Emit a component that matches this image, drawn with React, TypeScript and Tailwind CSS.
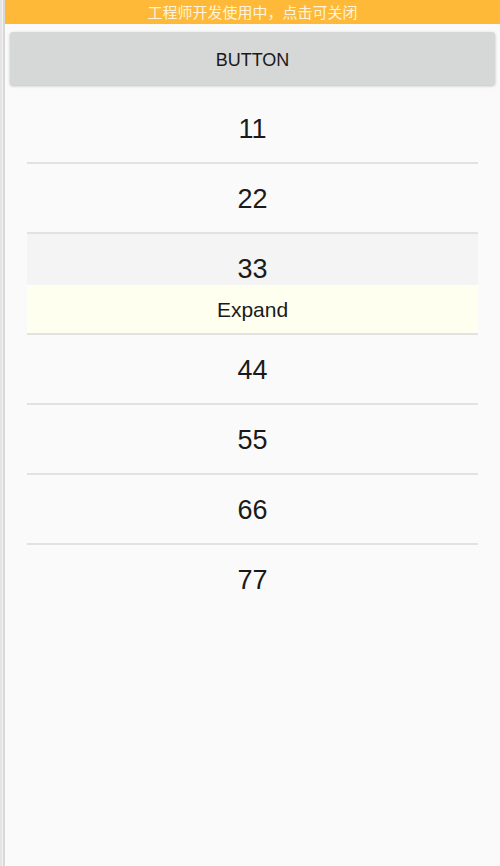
const rows = ["11", "22"];
const rowsAfter = ["44", "55", "66", "77"];

const Divider = () => <div className="h-[2px] bg-[#e2e2e2]" />;

const Row = ({ label }: { label: string }) => (
  <div className="h-[68px] flex items-center justify-center pt-[2px] text-[27px] text-[#1a1a1a]">{label}</div>
);

export default function App() {
  return (
    <div className="flex min-h-[866px] w-[500px] font-['Liberation_Sans','Noto_Sans_CJK_SC',sans-serif]">
      {/* left edge */}
      <div className="flex w-[5px] shrink-0">
        <div className="w-[2px] bg-[#e4e4e4]" />
        <div className="w-[1px] bg-[#f2f2f2]" />
        <div className="w-[2px] bg-[#d8d8d8]" />
      </div>

      <div className="flex-1 bg-[#fafafa] flex flex-col">
        <div className="h-[24px] bg-[#ffb938] flex items-center justify-center text-[15px] text-[#fff3dc] font-['Noto_Sans_CJK_SC',sans-serif]">
          工程师开发使用中，点击可关闭
        </div>

        <button className="mx-[5px] mt-[8px] h-[53px] pt-[3px] rounded-[3px] bg-[#d6d7d7] shadow-[0_1px_3px_rgba(0,0,0,0.25)] text-[18px] text-[#1a1a1a]">
          BUTTON
        </button>

        <div className="px-[22px] mt-[9px] flex flex-col">
          {rows.map((r) => (
            <div key={r}>
              <Row label={r} />
              <Divider />
            </div>
          ))}
          <div className="h-[51px] bg-[#f4f4f4] flex justify-center pt-[20px] text-[27px] text-[#1a1a1a] leading-[30px]">
            33
          </div>
          <div className="h-[48px] pt-[2px] bg-[#fffff0] flex items-center justify-center text-[21px] text-[#1a1a1a]">
            Expand
          </div>
          <Divider />
          {rowsAfter.map((r, i) => (
            <div key={r}>
              <Row label={r} />
              {i < rowsAfter.length - 1 && <Divider />}
            </div>
          ))}
        </div>
      </div>
    </div>
  );
}
